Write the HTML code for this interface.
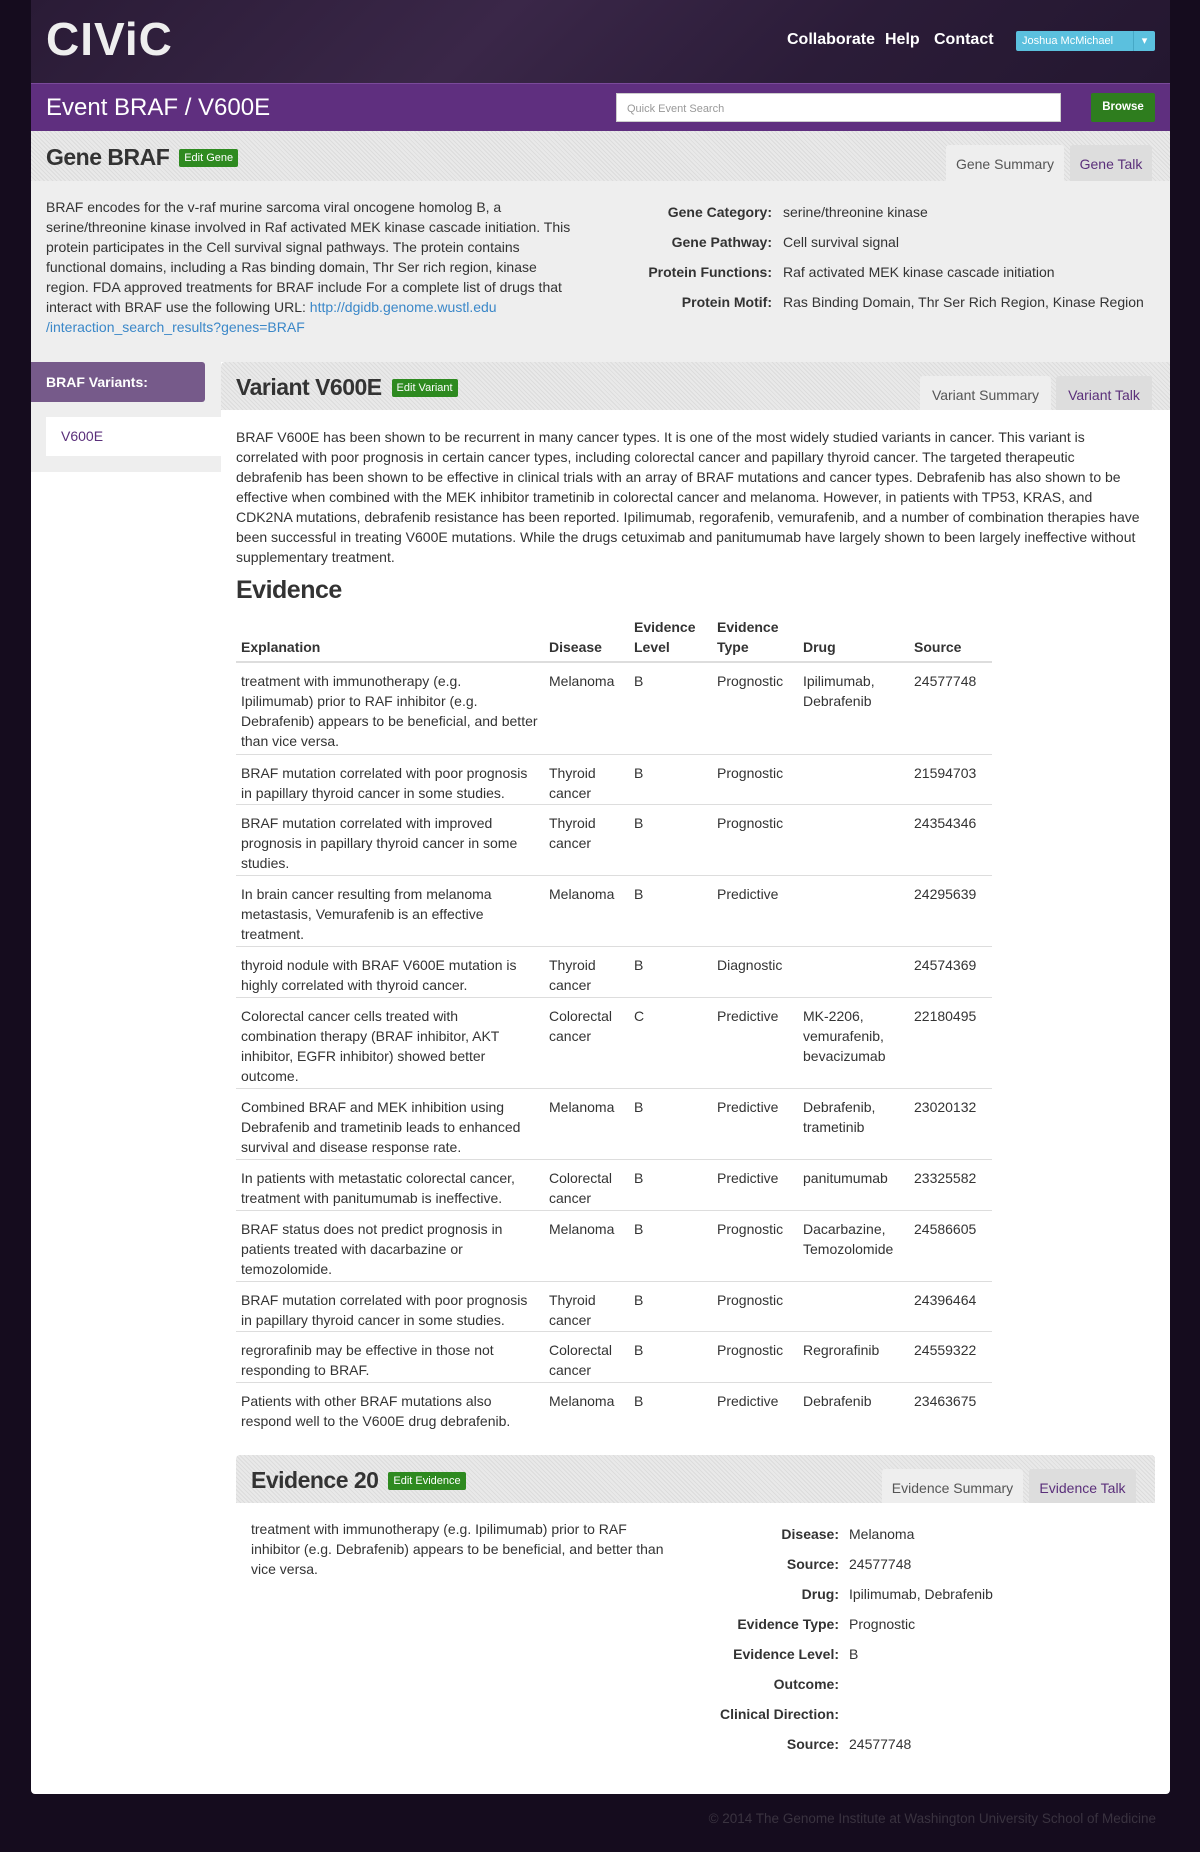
<!DOCTYPE html>
<html><head><meta charset="utf-8"><style>
*{box-sizing:border-box;margin:0;padding:0}
body{width:1200px;height:1852px;background:#150c1e;font-family:"Liberation Sans",sans-serif;color:#333;font-size:14px;position:relative;overflow:hidden}
.a{position:absolute}
#hdr{left:31px;top:0;width:1139px;height:83px;background:linear-gradient(135deg,#2a1b36,#3a2748 40%,#2b1c38 70%,#241730)}
#logo{left:46px;top:12px;font-size:46px;font-weight:bold;color:#eee;letter-spacing:1px}
.nav{top:31px;color:#fff;font-size:16px;font-weight:bold}
#user{left:1016px;top:31px;width:139px;height:20px;background:#5bc0de;color:#fff;font-size:11px;line-height:20px;padding-left:6px;border-radius:2px}
#bar{left:31px;top:83px;width:1139px;height:48px;background:#5f2f7f;border-top:1px solid #7a4a9a}
#title{left:46px;top:94px;color:#fff;font-size:24px}
#search{left:616px;top:93px;width:445px;height:29px;background:#fff;border:1px solid #ccc;font-size:11px;color:#999;padding:9px 10px}
#browse{left:1091px;top:93px;width:64px;height:29px;background:#2e7d1e;color:#fff;font-size:11.5px;font-weight:bold;text-align:center;line-height:29px;border-radius:2px}
#white{left:31px;top:131px;width:1139px;height:1663px;background:#fff;border-radius:0 0 4px 4px}
.stripe{background:repeating-linear-gradient(45deg,#dcdcdc 0 1px,#e9e9e9 1px 3px)}
#ghead{left:31px;top:131px;width:1139px;height:50px}
#gbody{left:31px;top:181px;width:1139px;height:181px;background:#eee}
h2{font-weight:bold;font-size:23px;color:#333;letter-spacing:-0.5px}
.edit{display:inline-block;background:#2e8a20;color:#fff;font-size:11px;font-weight:normal;padding:3px 5px;vertical-align:4px;border-radius:2px;margin-left:4px;letter-spacing:0}
.tab{height:36px;font-size:14px;text-align:center;line-height:38px;color:#555;background:#eee;border-radius:3px 3px 0 0}
.tab.t{background:#ddd;color:#5a2f7a}
.p{line-height:20px;white-space:nowrap}
.lab{text-align:right;font-weight:bold}
a{color:#3a87c8;text-decoration:none}
#side{left:31px;top:362px;width:190px;height:110px;background:#eee}
#sideh{left:31px;top:362px;width:174px;height:40px;background:#765a8a;color:#fff;font-weight:bold;padding:12px 15px;border-radius:0 3px 3px 0}
#v6{left:46px;top:417px;width:175px;height:39px;background:#fff;color:#5a2f7a;padding:11px 15px}
table{border-collapse:collapse;line-height:20px;white-space:nowrap}
td,th{vertical-align:top;text-align:left;padding:8px 5px 0 5px}
th{vertical-align:bottom;padding-bottom:4px;font-weight:bold}
thead tr{border-bottom:2px solid #ddd}
tbody tr{border-bottom:1px solid #ddd}
</style></head><body>
<div id="hdr" class="a"></div>
<div id="logo" class="a">CIViC</div>
<div class="a nav" style="left:787px">Collaborate</div>
<div class="a nav" style="left:885px">Help</div>
<div class="a nav" style="left:934px">Contact</div>
<div id="user" class="a">Joshua McMichael <span style="position:absolute;right:0;top:0;width:22px;text-align:center;border-left:1px solid #46a8c6">▾</span></div>
<div id="bar" class="a"></div>
<div id="title" class="a">Event BRAF / V600E</div>
<div id="search" class="a">Quick Event Search</div>
<div id="browse" class="a">Browse</div>
<div id="white" class="a"></div>
<div id="ghead" class="a stripe"></div>
<h2 class="a" style="left:46px;top:144px">Gene BRAF <span class="edit">Edit Gene</span></h2>
<div class="a tab" style="left:946px;top:145px;width:118px">Gene Summary</div>
<div class="a tab t" style="left:1070px;top:145px;width:82px">Gene Talk</div>
<div id="gbody" class="a"></div>
<div class="a p" style="left:46px;top:197px">BRAF encodes for the v-raf murine sarcoma viral oncogene homolog B, a<br>serine/threonine kinase involved in Raf activated MEK kinase cascade initiation. This<br>protein participates in the Cell survival signal pathways. The protein contains<br>functional domains, including a Ras binding domain, Thr Ser rich region, kinase<br>region. FDA approved treatments for BRAF include For a complete list of drugs that<br>interact with BRAF use the following URL: <a>http://dgidb.genome.wustl.edu</a><br><a>/interaction_search_results?genes=BRAF</a></div>
<div class="a p lab" style="left:572px;top:202px;width:200px">Gene Category:</div><div class="a p" style="left:783px;top:202px">serine/threonine kinase</div>
<div class="a p lab" style="left:572px;top:232px;width:200px">Gene Pathway:</div><div class="a p" style="left:783px;top:232px">Cell survival signal</div>
<div class="a p lab" style="left:572px;top:262px;width:200px">Protein Functions:</div><div class="a p" style="left:783px;top:262px">Raf activated MEK kinase cascade initiation</div>
<div class="a p lab" style="left:572px;top:292px;width:200px">Protein Motif:</div><div class="a p" style="left:783px;top:292px">Ras Binding Domain, Thr Ser Rich Region, Kinase Region</div>
<div id="side" class="a"></div>
<div id="sideh" class="a">BRAF Variants:</div>
<div id="v6" class="a">V600E</div>
<div class="a stripe" style="left:221px;top:362px;width:949px;height:48px;border-radius:4px 0 0 0"></div>
<h2 class="a" style="left:236px;top:374px">Variant V600E <span class="edit">Edit Variant</span></h2>
<div class="a tab" style="left:920px;top:376px;width:131px;height:34px">Variant Summary</div>
<div class="a tab t" style="left:1056px;top:376px;width:96px;height:34px">Variant Talk</div>
<div class="a p" style="left:236px;top:427px">BRAF V600E has been shown to be recurrent in many cancer types. It is one of the most widely studied variants in cancer. This variant is<br>correlated with poor prognosis in certain cancer types, including colorectal cancer and papillary thyroid cancer. The targeted therapeutic<br>debrafenib has been shown to be effective in clinical trials with an array of BRAF mutations and cancer types. Debrafenib has also shown to be<br>effective when combined with the MEK inhibitor trametinib in colorectal cancer and melanoma. However, in patients with TP53, KRAS, and<br>CDK2NA mutations, debrafenib resistance has been reported. Ipilimumab, regorafenib, vemurafenib, and a number of combination therapies have<br>been successful in treating V600E mutations. While the drugs cetuximab and panitumumab have largely shown to been largely ineffective without<br>supplementary treatment.</div>
<h2 class="a" style="left:236px;top:576px;font-size:25px">Evidence</h2>
<table class="a" style="left:236px;top:609px;width:756px">
<colgroup><col style="width:308px"><col style="width:85px"><col style="width:83px"><col style="width:86px"><col style="width:111px"><col></colgroup>
<thead><tr style="height:51px"><th>Explanation</th><th>Disease</th><th>Evidence<br>Level</th><th>Evidence<br>Type</th><th>Drug</th><th>Source</th></tr></thead>
<tbody>
<tr style="height:92px"><td>treatment with immunotherapy (e.g.<br>Ipilimumab) prior to RAF inhibitor (e.g.<br>Debrafenib) appears to be beneficial, and better<br>than vice versa.</td><td>Melanoma</td><td>B</td><td>Prognostic</td><td>Ipilimumab,<br>Debrafenib</td><td>24577748</td></tr>
<tr style="height:50px"><td>BRAF mutation correlated with poor prognosis<br>in papillary thyroid cancer in some studies.</td><td>Thyroid<br>cancer</td><td>B</td><td>Prognostic</td><td></td><td>21594703</td></tr>
<tr style="height:71px"><td>BRAF mutation correlated with improved<br>prognosis in papillary thyroid cancer in some<br>studies.</td><td>Thyroid<br>cancer</td><td>B</td><td>Prognostic</td><td></td><td>24354346</td></tr>
<tr style="height:71px"><td>In brain cancer resulting from melanoma<br>metastasis, Vemurafenib is an effective<br>treatment.</td><td>Melanoma</td><td>B</td><td>Predictive</td><td></td><td>24295639</td></tr>
<tr style="height:51px"><td>thyroid nodule with BRAF V600E mutation is<br>highly correlated with thyroid cancer.</td><td>Thyroid<br>cancer</td><td>B</td><td>Diagnostic</td><td></td><td>24574369</td></tr>
<tr style="height:91px"><td>Colorectal cancer cells treated with<br>combination therapy (BRAF inhibitor, AKT<br>inhibitor, EGFR inhibitor) showed better<br>outcome.</td><td>Colorectal<br>cancer</td><td>C</td><td>Predictive</td><td>MK-2206,<br>vemurafenib,<br>bevacizumab</td><td>22180495</td></tr>
<tr style="height:71px"><td>Combined BRAF and MEK inhibition using<br>Debrafenib and trametinib leads to enhanced<br>survival and disease response rate.</td><td>Melanoma</td><td>B</td><td>Predictive</td><td>Debrafenib,<br>trametinib</td><td>23020132</td></tr>
<tr style="height:51px"><td>In patients with metastatic colorectal cancer,<br>treatment with panitumumab is ineffective.</td><td>Colorectal<br>cancer</td><td>B</td><td>Predictive</td><td>panitumumab</td><td>23325582</td></tr>
<tr style="height:71px"><td>BRAF status does not predict prognosis in<br>patients treated with dacarbazine or<br>temozolomide.</td><td>Melanoma</td><td>B</td><td>Prognostic</td><td>Dacarbazine,<br>Temozolomide</td><td>24586605</td></tr>
<tr style="height:50px"><td>BRAF mutation correlated with poor prognosis<br>in papillary thyroid cancer in some studies.</td><td>Thyroid<br>cancer</td><td>B</td><td>Prognostic</td><td></td><td>24396464</td></tr>
<tr style="height:51px"><td>regrorafinib may be effective in those not<br>responding to BRAF.</td><td>Colorectal<br>cancer</td><td>B</td><td>Prognostic</td><td>Regrorafinib</td><td>24559322</td></tr>
<tr style="height:51px;border-bottom:none"><td>Patients with other BRAF mutations also<br>respond well to the V600E drug debrafenib.</td><td>Melanoma</td><td>B</td><td>Predictive</td><td>Debrafenib</td><td>23463675</td></tr>
</tbody></table>
<div class="a stripe" style="left:236px;top:1455px;width:919px;height:48px;border-radius:4px 4px 0 0"></div>
<h2 class="a" style="left:251px;top:1467px">Evidence 20 <span class="edit">Edit Evidence</span></h2>
<div class="a tab" style="left:882px;top:1469px;width:141px;height:34px">Evidence Summary</div>
<div class="a tab t" style="left:1029px;top:1469px;width:107px;height:34px">Evidence Talk</div>
<div class="a p" style="left:251px;top:1519px">treatment with immunotherapy (e.g. Ipilimumab) prior to RAF<br>inhibitor (e.g. Debrafenib) appears to be beneficial, and better than<br>vice versa.</div>
<div class="a p lab" style="left:639px;top:1524px;width:200px">Disease:</div><div class="a p" style="left:849px;top:1524px">Melanoma</div>
<div class="a p lab" style="left:639px;top:1554px;width:200px">Source:</div><div class="a p" style="left:849px;top:1554px">24577748</div>
<div class="a p lab" style="left:639px;top:1584px;width:200px">Drug:</div><div class="a p" style="left:849px;top:1584px">Ipilimumab, Debrafenib</div>
<div class="a p lab" style="left:639px;top:1614px;width:200px">Evidence Type:</div><div class="a p" style="left:849px;top:1614px">Prognostic</div>
<div class="a p lab" style="left:639px;top:1644px;width:200px">Evidence Level:</div><div class="a p" style="left:849px;top:1644px">B</div>
<div class="a p lab" style="left:639px;top:1674px;width:200px">Outcome:</div>
<div class="a p lab" style="left:639px;top:1704px;width:200px">Clinical Direction:</div>
<div class="a p lab" style="left:639px;top:1734px;width:200px">Source:</div><div class="a p" style="left:849px;top:1734px">24577748</div>
<div class="a" style="right:44px;top:1811px;color:#3a3340;font-size:13.5px">© 2014 The Genome Institute at Washington University School of Medicine</div>
</body></html>
